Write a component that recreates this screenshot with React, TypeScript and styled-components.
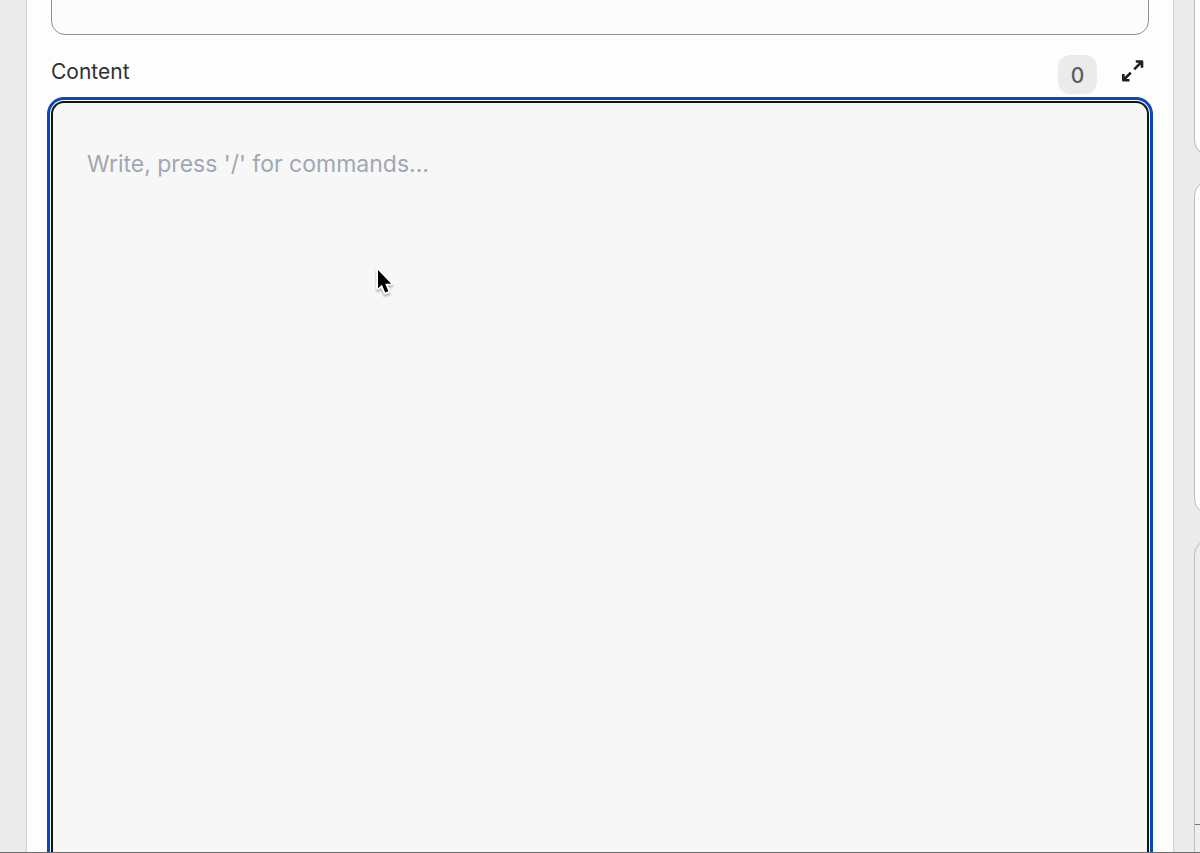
import React from "react";
import styled, { createGlobalStyle } from "styled-components";

const GlobalStyle = createGlobalStyle`
  *, *::before, *::after { box-sizing: border-box; }
  body {
    margin: 0;
    background: #ebebeb;
    color: #303030;
    font-family: Inter, "Liberation Sans", sans-serif;
  }
`;

const Page = styled.div`
  display: flex;
  height: 100vh;
  padding-left: 26px;
  overflow: hidden;
  border-bottom: 1px solid #6a6a6a;
`;

const Panel = styled.main`
  flex: 1;
  min-width: 0;
  display: flex;
  flex-direction: column;
  padding: 0 24px;
  background: #fdfdfd;
  border: solid #d2d2d2;
  border-width: 0 1px;
`;

const TitleInput = styled.input`
  flex: none;
  width: 100%;
  height: 64px;
  margin-top: -29px;
  padding: 0 16px;
  background: #fcfcfc;
  border: 1px solid #8f8f8f;
  border-radius: 14px;
  font: inherit;
  font-size: 21px;
  outline: none;
`;

const FieldHeader = styled.div`
  flex: none;
  display: flex;
  align-items: flex-start;
  justify-content: space-between;
  height: 66px;
`;

const Label = styled.label`
  padding-top: 24px;
  font-size: 21px;
  line-height: 26px;
`;

const Tools = styled.div`
  display: flex;
  align-items: flex-start;
  padding: 20px 4px 0 0;
  gap: 24px;
`;

const Counter = styled.output`
  width: 39px;
  height: 39px;
  border-radius: 12px;
  background: #ebebeb;
  color: #5c5c5c;
  font-size: 21px;
  font-weight: 500;
  line-height: 42px;
  text-align: center;
`;

const ExpandButton = styled.button`
  display: flex;
  width: 24px;
  height: 32px;
  padding: 4px 0 0;
  border: 0;
  background: none;
  color: #1f1f1f;
  cursor: pointer;
`;

const Editor = styled.textarea`
  flex: none;
  display: block;
  width: 100%;
  height: 1000px;
  padding: 45px 34px;
  background: #f7f7f8;
  border: 2px solid #141414;
  border-radius: 13px;
  box-shadow: 0 0 0 1px #fff, 0 0 0 4px #0649bd;
  color: #303030;
  font: inherit;
  font-size: 23px;
  line-height: 32px;
  resize: none;
  outline: none;
  &::placeholder { color: #a1a7b1; opacity: 1; }
`;

const Sidebar = styled.aside`
  flex: none;
  display: flex;
  flex-direction: column;
  gap: 24px;
  width: 26px;
  padding-left: 20px;
`;

const Card = styled.section<{ $height: number; $muted?: boolean }>`
  flex: none;
  width: 320px;
  height: ${({ $height }) => $height}px;
  background: ${({ $muted }) => ($muted ? "#eeeeee" : "#fdfdfd")};
  border: 1px solid #bcbcbc;
  border-radius: 16px;
  &:first-child { border-top: 0; border-radius: 0 0 16px 16px; }
`;

const Divider = styled.hr`
  margin: 284px 0 0;
  border: 0;
  border-top: 1px solid #777;
`;

const Pointer = styled.svg`
  position: absolute;
  left: 373px;
  top: 265px;
  pointer-events: none;
  filter: drop-shadow(0 2px 1px rgba(0, 0, 0, 0.3));
`;

export default function App() {
  return (
    <>
      <GlobalStyle />
      <Page>
        <Panel>
          <TitleInput aria-label="Title" />
          <FieldHeader>
            <Label htmlFor="content">Content</Label>
            <Tools>
              <Counter htmlFor="content">0</Counter>
              <ExpandButton type="button" aria-label="Expand editor">
                <svg width="24" height="24" viewBox="0 0 24 24" fill="none" stroke="currentColor" strokeWidth="2.6" strokeLinejoin="round" aria-hidden="true">
                  <path d="M13.2 10.3 20.8 2.7M14.8 2.5H21V8.7M9.8 13.7 2.5 21M2.3 15V21.2H8.5" />
                </svg>
              </ExpandButton>
            </Tools>
          </FieldHeader>
          <Editor id="content" placeholder="Write, press '/' for commands..." />
        </Panel>
        <Sidebar>
          <Card $height={156} />
          <Card $height={335} />
          <Card $height={420} $muted>
            <Divider />
          </Card>
        </Sidebar>
      </Page>
      <Pointer width="26" height="36" viewBox="0 0 26 36" aria-hidden="true">
        <path
          d="M5 5V23.3L8.9 19.7L12.2 27.6L15.4 26.2L12.2 18.7H18.2Z"
          fill="#000"
          stroke="#fff"
          strokeWidth="3.6"
          paintOrder="stroke"
          strokeLinejoin="round"
        />
      </Pointer>
    </>
  );
}
